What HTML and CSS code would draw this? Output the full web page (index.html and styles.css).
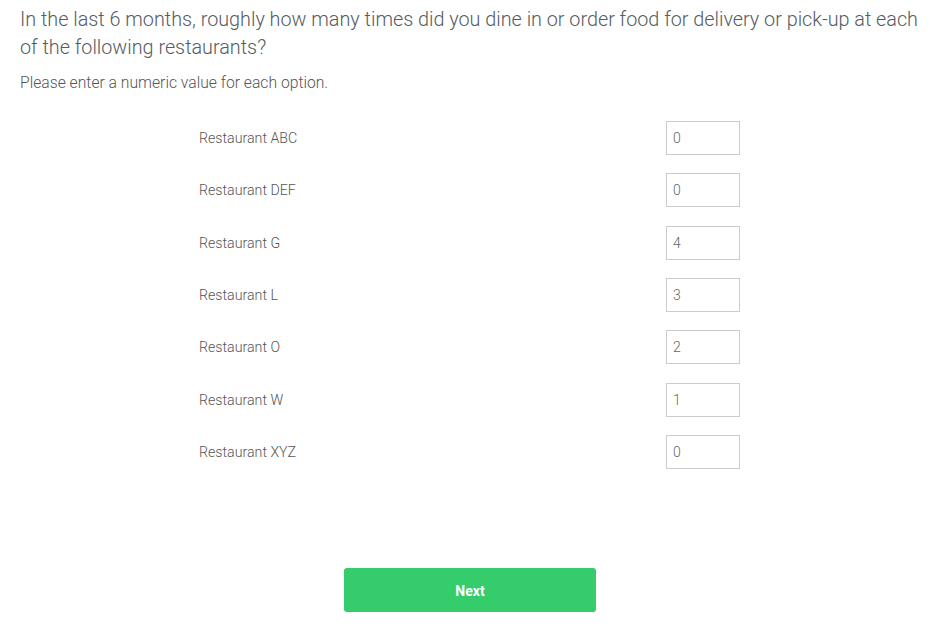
FILE: index.html
```html
<!DOCTYPE html>
<html>
<head>
<meta charset="utf-8">
<link rel="stylesheet" href="styles.css">
</head>
<body>
<div class="page">
  <h1 class="question">In the last 6 months, roughly how many times did you dine in or order food for delivery or pick-up at each of the following restaurants?</h1>
  <p class="hint">Please enter a numeric value for each option.</p>
  <div class="matrix">
    <div class="row"><span class="label">Restaurant ABC</span><input class="num" type="text" value="0"></div>
    <div class="row"><span class="label">Restaurant DEF</span><input class="num" type="text" value="0"></div>
    <div class="row"><span class="label">Restaurant G</span><input class="num" type="text" value="4"></div>
    <div class="row"><span class="label">Restaurant L</span><input class="num" type="text" value="3"></div>
    <div class="row"><span class="label">Restaurant O</span><input class="num" type="text" value="2"></div>
    <div class="row"><span class="label">Restaurant W</span><input class="num" type="text" value="1"></div>
    <div class="row"><span class="label">Restaurant XYZ</span><input class="num" type="text" value="0"></div>
  </div>
  <div class="actions">
    <button class="next" type="button">Next</button>
  </div>
</div>
</body>
</html>
```

FILE: styles.css
```css
html, body {
  margin: 0;
  padding: 0;
  background: #ffffff;
}

body {
  font-family: Roboto, "Liberation Sans", sans-serif;
  color: #555b62;
}

.page {
  padding: 6px 11px 0 20px;
  display: flex;
  flex-direction: column;
}

.question {
  margin: 0;
  font-size: 19.8px;
  font-weight: 300;
  line-height: 28px;
  color: #545b63;
}

.hint {
  margin: 11px 0 0 0;
  font-size: 15.7px;
  font-weight: 300;
  line-height: 20px;
  color: #555555;
}

.matrix {
  width: 541px;
  align-self: center;
  margin-top: 19px;
  display: grid;
  grid-auto-rows: 52.33px;
}

.row {
  display: flex;
  align-items: center;
  justify-content: space-between;
}

.label {
  font-size: 14.2px;
  font-weight: 300;
  color: #555555;
}

.num {
  box-sizing: border-box;
  width: 74px;
  height: 34px;
  border: 1px solid #cccccc;
  border-radius: 0;
  padding: 0 6px;
  margin: 0;
  font-family: Roboto, "Liberation Sans", sans-serif;
  font-size: 14px;
  font-weight: 300;
  color: #666666;
  background: #ffffff;
  outline: none;
}

.actions {
  display: flex;
  justify-content: center;
  margin-top: 90px;
  padding-left: 1px;
}

.next {
  width: 252px;
  height: 44px;
  border: none;
  border-radius: 3px;
  background: #35cc6b;
  color: #ffffff;
  font-family: Roboto, "Liberation Sans", sans-serif;
  font-size: 14px;
  font-weight: 700;
  padding-top: 2px;
  cursor: pointer;
}
```
